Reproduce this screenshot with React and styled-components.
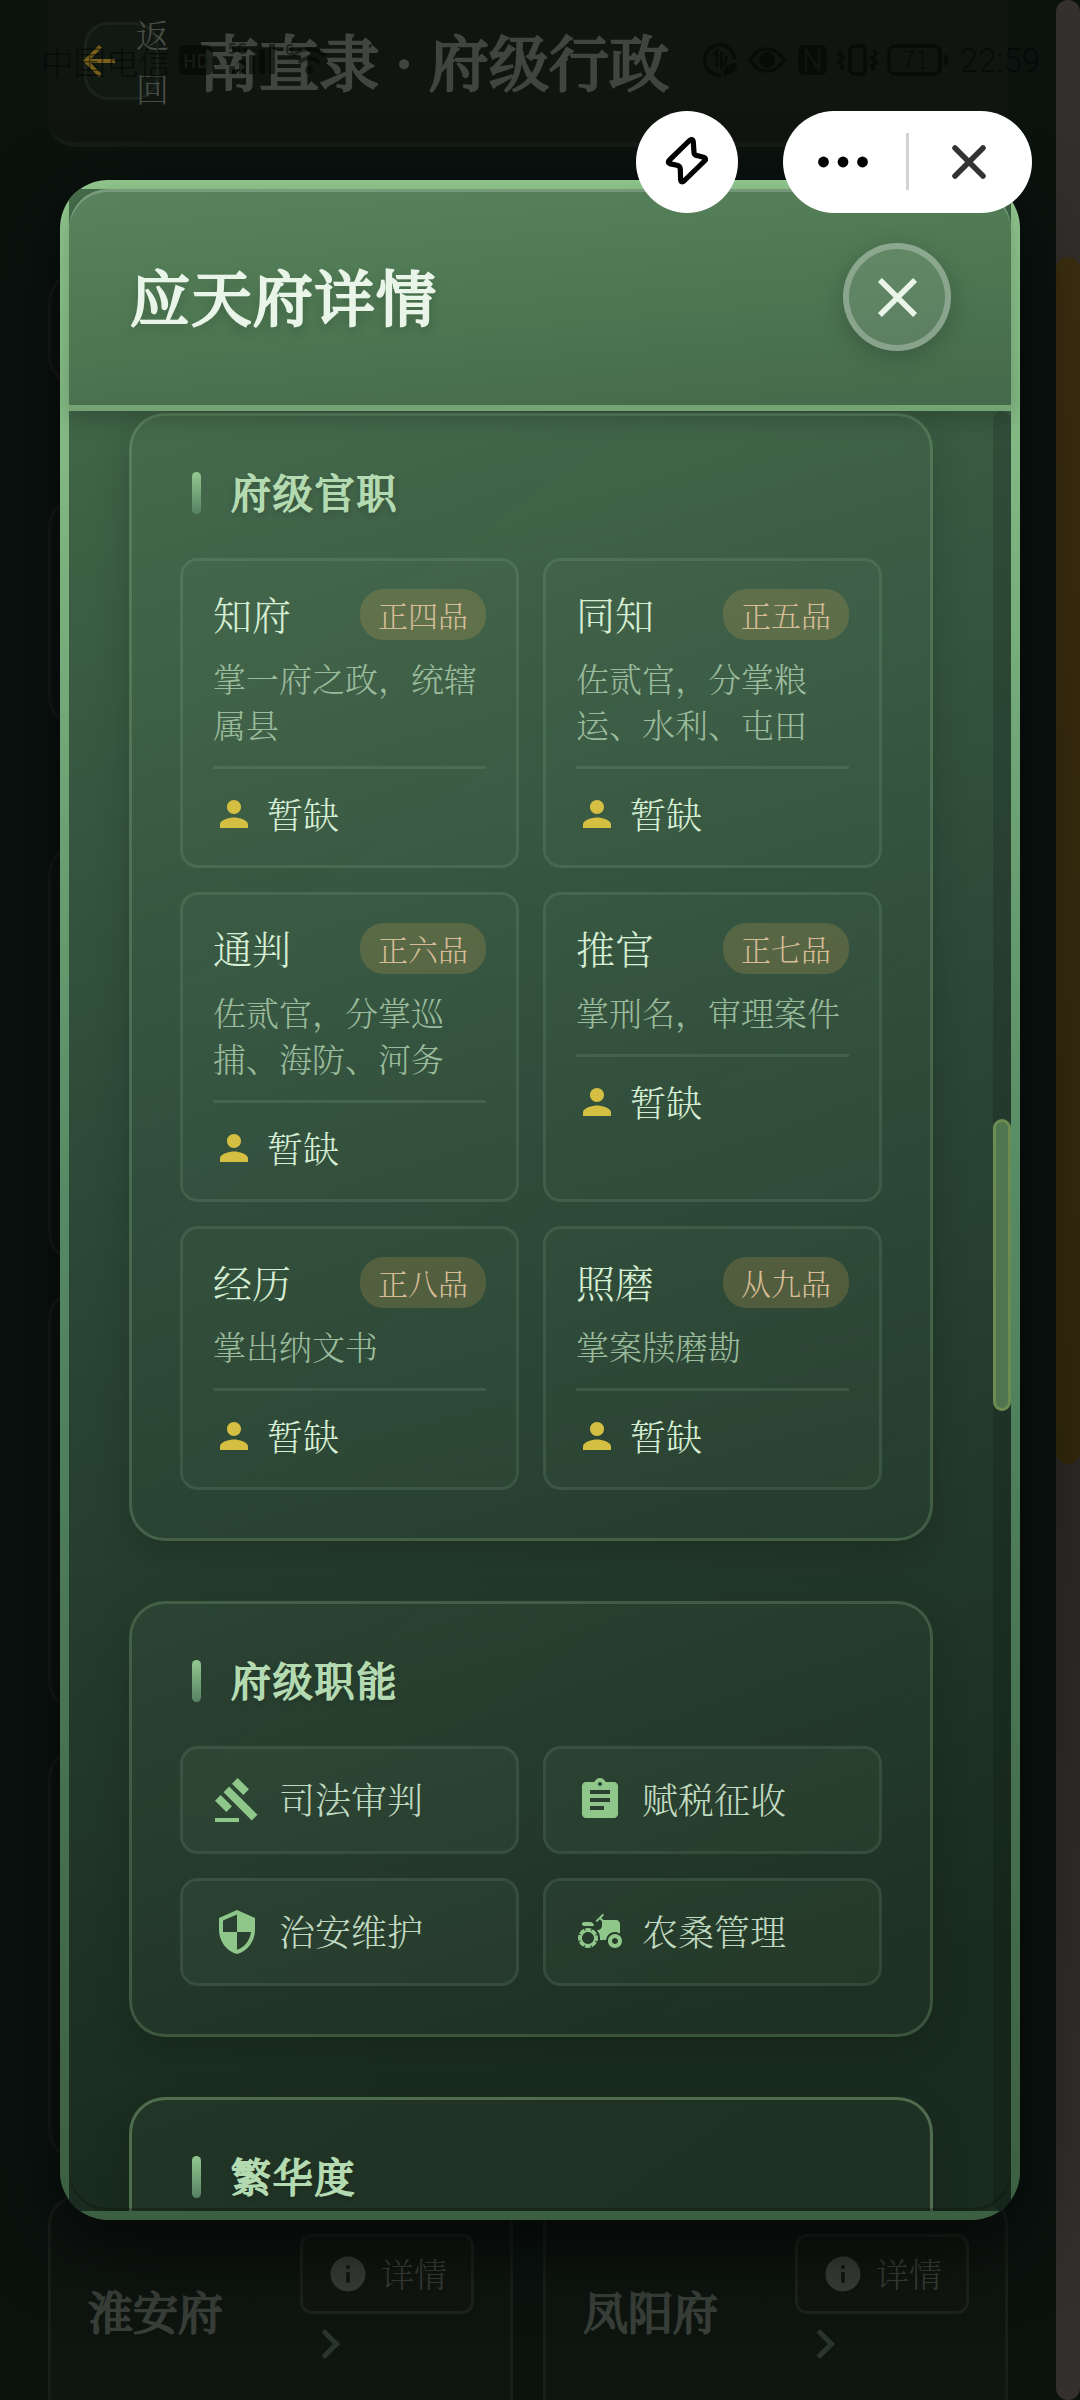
import styled, { createGlobalStyle } from "styled-components";
import {
    MdPerson,
    MdGavel,
    MdAssignment,
    MdSecurity,
    MdAgriculture,
    MdArrowBack,
    MdChevronRight,
    MdInfo,
    MdClose,
} from "react-icons/md";

const offices = [
    { name: "知府", rank: "正四品", duty: "掌一府之政，统辖属县" },
    { name: "同知", rank: "正五品", duty: "佐贰官，分掌粮运、水利、屯田" },
    { name: "通判", rank: "正六品", duty: "佐贰官，分掌巡捕、海防、河务" },
    { name: "推官", rank: "正七品", duty: "掌刑名，审理案件" },
    { name: "经历", rank: "正八品", duty: "掌出纳文书" },
    { name: "照磨", rank: "从九品", duty: "掌案牍磨勘" },
];

const duties = [
    { label: "司法审判", Icon: MdGavel },
    { label: "赋税征收", Icon: MdAssignment },
    { label: "治安维护", Icon: MdSecurity },
    { label: "农桑管理", Icon: MdAgriculture },
];

export default function App() {
    return (
        <Screen>
            <GlobalStyle />
            <PageContent>
                <PageHeader>
                    <BackButton>
                        <MdArrowBack />
                        <span>返回</span>
                    </BackButton>
                    <h1>南直隶<Dot>·</Dot>府级行政</h1>
                </PageHeader>
                <Panel $top={125} $height={114} />
                <Panel $top={111} $height={230} />
                <Panel $top={118} $height={417} />
                <Panel $top={28} $height={421} />
                <Panel $top={37} $height={412} />
                <Prefectures>
                    <Prefecture name="淮安府" />
                    <Prefecture name="凤阳府" />
                </Prefectures>
            </PageContent>
            <PageTrack>
                <PageThumb />
            </PageTrack>
            <StatusBar />
            <Modal>
                <ModalInner>
                    <ModalHeader>
                        <h2>应天府详情</h2>
                        <CloseButton>
                            <MdClose />
                        </CloseButton>
                    </ModalHeader>
                    <ModalBody>
                        <Sections>
                            <Section>
                                <SectionTitle>府级官职</SectionTitle>
                                <Grid>
                                    {offices.map((o) => (
                                        <Office key={o.name} {...o} />
                                    ))}
                                </Grid>
                            </Section>
                            <Section>
                                <SectionTitle>府级职能</SectionTitle>
                                <Grid>
                                    {duties.map(({ label, Icon }) => (
                                        <DutyCard key={label}>
                                            <Icon />
                                            <span>{label}</span>
                                        </DutyCard>
                                    ))}
                                </Grid>
                            </Section>
                            <Section>
                                <SectionTitle>繁华度</SectionTitle>
                            </Section>
                        </Sections>
                        <Track>
                            <Thumb />
                        </Track>
                    </ModalBody>
                </ModalInner>
            </Modal>
            <Capsules />
        </Screen>
    );
}

function Office({ name, rank, duty }) {
    return (
        <OfficeCard>
            <OfficeHead>
                <OfficeName>{name}</OfficeName>
                <Rank>{rank}</Rank>
            </OfficeHead>
            <Desc>{duty}</Desc>
            <Holder>
                <MdPerson />
                <span>暂缺</span>
            </Holder>
        </OfficeCard>
    );
}

function Prefecture({ name }) {
    return (
        <PrefectureCard>
            <h3>{name}</h3>
            <Actions>
                <InfoButton>
                    <MdInfo />
                    <span>详情</span>
                </InfoButton>
                <MdChevronRight />
            </Actions>
        </PrefectureCard>
    );
}

function StatusBar() {
    return (
        <Status>
            <StatusGroup>
                <Carrier>中国电信</Carrier>
                <Hd>HD</Hd>
                <svg width="104" height="40" viewBox="0 0 104 40" fill="currentColor">
                    <text x="3" y="14" fontSize="15" fontWeight="700">5G</text>
                    <rect x="4" y="26" width="6" height="8" />
                    <rect x="14" y="21" width="6" height="13" />
                    <rect x="24" y="15" width="6" height="19" />
                    <rect x="34" y="9" width="6" height="25" />
                    <rect x="44" y="4" width="6" height="30" />
                    <text x="60" y="15" fontSize="15" fontWeight="700">6</text>
                    <g fill="none" stroke="currentColor" strokeWidth="4">
                        <path d="M68 16a22 22 0 0 1 32 0" />
                        <path d="M74 23a13 13 0 0 1 20 0" />
                    </g>
                    <circle cx="84" cy="30" r="4" />
                </svg>
            </StatusGroup>
            <StatusGroup>
                <svg width="245" height="36" viewBox="0 0 245 36" fill="none" stroke="currentColor" strokeWidth="3.4">
                    <path d="M31.500 17.500A15 15 0 1 0 18 33" />
                    <path d="M10 13l4-3.500v15M18.500 9.500v15l4.500-4.500M23 14v5" strokeWidth="2.800" />
                    <path d="M20 33c0-8 5-12 14-12 0 8-5 12-14 12z" fill="currentColor" stroke="none" />
                    <path d="M47 18c4-7 10-11 17-11s13 4 17 11c-4 7-10 11-17 11s-13-4-17-11z" />
                    <circle cx="64" cy="18" r="8" fill="currentColor" stroke="none" />
                    <rect x="95" y="3" width="29" height="30" rx="6" fill="currentColor" stroke="none" />
                    <path d="M103 30V8l13 20V6" stroke="#10160f" strokeWidth="2.500" />
                    <rect x="147" y="4" width="15" height="28" rx="4" />
                    <path d="M138 8l-2 4 4 4-4 4 4 4-2 4M171 8l2 4-4 4 4 4-4 4 2 4" />
                    <rect x="186" y="4" width="51" height="28" rx="6" />
                    <path d="M243 13v10" />
                    <text x="199" y="27" fontSize="25" fontWeight="300" fill="currentColor" stroke="none">71</text>
                </svg>
                <Clock>22:59</Clock>
            </StatusGroup>
        </Status>
    );
}

function Capsules() {
    return (
        <CapsuleRow>
            <Capsule $width={102}>
                <svg width="48" height="54" viewBox="0 0 48 54" fill="none" stroke="#000" strokeWidth="5.200" strokeLinejoin="round">
                    <path d="M26.500 5.500Q30 3 30.300 7L31 17.500Q31.200 20 34 20.600L40.500 22.300Q44 23.500 41.500 26L21.500 45.500Q18 48.500 17.600 44.500L17.300 34Q17 31 14 30.300L7.500 28.900Q3.500 27.800 6.500 25Z" />
                </svg>
            </Capsule>
            <Capsule $width={249}>
                <svg width="249" height="102" viewBox="0 0 249 102">
                    <circle cx="40.500" cy="51" r="5.400" />
                    <circle cx="60" cy="51" r="5.400" />
                    <circle cx="79.500" cy="51" r="5.400" />
                    <path d="M124.500 22v57" stroke="#d3d3d3" strokeWidth="3" />
                    <path d="M172 37l28 28M200 37l-28 28" stroke="#333" strokeWidth="5.500" strokeLinecap="round" />
                </svg>
            </Capsule>
        </CapsuleRow>
    );
}

const GlobalStyle = createGlobalStyle`
    * {
        box-sizing: border-box;
    }
    body {
        margin: 0;
        background: #0a120e;
    }
    h1, h2, h3, p {
        margin: 0;
    }
`;

const Screen = styled.div`
    position: relative;
    display: flex;
    width: 1080px;
    height: 2400px;
    overflow: hidden;
    background: #0b130f;
    font-family: "Noto Serif CJK SC", "Noto Serif SC", "Noto Sans CJK SC", serif;
    font-weight: 300;
`;

const PageContent = styled.div`
    flex: 1;
    padding: 0 48px;
`;

const PageHeader = styled.div`
    display: flex;
    align-items: flex-start;
    height: 147px;
    padding: 22px 0 0 36px;
    background: #10160f;
    border-bottom: 5px solid #151b15;
    border-radius: 0 0 27px 27px;
    h1 {
        margin: -6px 0 0 40px;
        font-size: 60px;
        line-height: 88px;
        font-weight: 400;
        -webkit-text-stroke: 2.6px;
        color: #40463f;
        white-space: nowrap;
    }
`;

const Dot = styled.span`
    display: inline-block;
    width: 50px;
    text-align: center;
`;

const BackButton = styled.div`
    display: flex;
    align-items: center;
    width: 75px;
    height: 78px;
    border: 3px solid #1a231b;
    border-radius: 24px;
    background: #111912;
    color: #484e47;
    svg {
        flex: none;
        margin-left: -12px;
        width: 48px;
        height: 48px;
        color: #7a601b;
    }
    span {
        flex: none;
        width: 34px;
        margin-left: 13px;
        font-size: 33px;
        line-height: 54px;
        word-break: break-all;
    }
`;

const Panel = styled.div`
    height: ${(props) => props.$height}px;
    margin-top: ${(props) => props.$top}px;
    border: 3px solid #161b18;
    border-radius: 30px;
    background: #0d1310;
`;

const Prefectures = styled.div`
    display: grid;
    grid-template-columns: 465px 465px;
    gap: 30px;
    margin-top: 35px;
`;

const PrefectureCard = styled.div`
    display: flex;
    justify-content: space-between;
    align-items: flex-start;
    height: 260px;
    padding: 36px;
    border: 3px solid #181e19;
    border-radius: 30px;
    background: linear-gradient(#0d1310, #0f170f);
    h3 {
        margin: 45px 0 0 1px;
        font-size: 45px;
        line-height: 64px;
        font-weight: 400;
        -webkit-text-stroke: 2px;
        color: #383e38;
    }
`;

const Actions = styled.div`
    display: flex;
    flex-direction: column;
    > svg {
        width: 60px;
        height: 60px;
        color: #2a352e;
    }
`;

const InfoButton = styled.div`
    display: flex;
    align-items: center;
    justify-content: center;
    gap: 12px;
    width: 174px;
    height: 80px;
    border: 3px solid #1c221c;
    border-radius: 12px;
    background: #10160f;
    color: #383e38;
    font-size: 33px;
    svg {
        width: 42px;
        height: 42px;
    }
    span {
        margin-top: -3px;
    }
`;

const PageTrack = styled.div`
    width: 24px;
    height: 2400px;
    padding-top: 257px;
    background: linear-gradient(#33302d, #2b2725 60%, #33302d);
    border-radius: 12px;
`;

const PageThumb = styled.div`
    height: 1207px;
    border-radius: 12px;
    background: linear-gradient(#3a2d10, #31270d);
`;

const Status = styled.div`
    position: absolute;
    top: 36px;
    left: 41px;
    width: 1001px;
    height: 48px;
    display: flex;
    justify-content: space-between;
    color: rgba(0, 0, 0, 0.5);
    font-family: "Noto Sans CJK SC", sans-serif;
`;

const StatusGroup = styled.div`
    display: flex;
    align-items: center;
`;

const Carrier = styled.span`
    font-size: 32.5px;
`;

const Hd = styled.span`
    margin: 0 12px 0 8px;
    padding: 0 4px;
    border-radius: 6px;
    background: rgba(0, 0, 0, 0.5);
    color: #171d17;
    font-size: 18px;
    line-height: 30px;
    font-weight: 500;
`;

const Clock = styled.span`
    width: 82px;
    margin-left: 12px;
    font-family: Roboto, sans-serif;
    font-size: 33px;
    font-weight: 300;
    white-space: nowrap;
`;

const Modal = styled.div`
    position: absolute;
    top: 180px;
    left: 60px;
    width: 960px;
    height: 2040px;
    padding: 9px;
    overflow: hidden;
    border-radius: 48px;
    background: linear-gradient(#92c88e, #568a64 50%, #3b5f41);
    box-shadow: 0 24px 80px rgba(0, 0, 0, 0.7);
`;

const ModalInner = styled.div`
    position: relative;
    display: flex;
    flex-direction: column;
    height: 2022px;
    background: linear-gradient(165deg, #466d4c 0%, #2c4837 45%, #1a2c1f 88%);
    &::after {
        content: "";
        position: absolute;
        inset: 0;
        z-index: 2;
        border-radius: 39px;
        box-shadow: inset 0 3px 0 rgba(255, 255, 255, 0.2), inset 0 -3px 0 rgba(0, 0, 0, 0.2);
        pointer-events: none;
    }
`;

const ModalHeader = styled.div`
    display: flex;
    flex: none;
    align-items: center;
    justify-content: space-between;
    height: 222px;
    padding: 0 60px;
    border-bottom: 6px solid #75a474;
    border-radius: 39px 39px 0 0;
    background: linear-gradient(175deg, #58835c, #4e7852 50%, #45694b);
    z-index: 1;
    box-shadow: 0 6px 24px rgba(0, 0, 0, 0.22);
    h2 {
        margin: -4px 0 0 1px;
        font-size: 60px;
        letter-spacing: 1.5px;
        font-weight: 400;
        -webkit-text-stroke: 2.6px;
        color: #e8f5e8;
        text-shadow: 0 6px 12px rgba(0, 0, 0, 0.3);
    }
`;

const CloseButton = styled.div`
    display: flex;
    align-items: center;
    justify-content: center;
    width: 108px;
    height: 108px;
    border: 6px solid rgba(255, 255, 255, 0.27);
    border-radius: 50%;
    background: rgba(255, 255, 255, 0.11);
    box-shadow: 0 6px 24px rgba(0, 0, 0, 0.2);
    color: #e8f5e8;
    svg {
        width: 67px;
        height: 67px;
    }
`;

const ModalBody = styled.div`
    display: flex;
    flex: 1;
    min-height: 0;
    justify-content: space-between;
    overflow: hidden;
`;

const Sections = styled.div`
    display: flex;
    flex-direction: column;
    gap: 60px;
    width: 864px;
    padding: 2px 0 0 60px;
`;

const Section = styled.div`
    flex: none;
    padding: 48px;
    border: 3px solid rgba(160, 205, 150, 0.25);
    border-radius: 36px;
    background: linear-gradient(145deg, rgba(160, 201, 160, 0.06), rgba(150, 201, 150, 0.03));
    background-clip: padding-box;
    box-shadow: 0 12px 36px rgba(0, 0, 0, 0.17);
    &:last-child {
        border-color: rgba(160, 205, 150, 0.4);
    }
`;

const SectionTitle = styled.div`
    display: flex;
    align-items: center;
    height: 58px;
    margin-bottom: 36px;
    padding: 0 0 5px 12px;
    font-size: 40px;
    font-weight: 400;
    -webkit-text-stroke: 1.8px;
    letter-spacing: 1.8px;
    color: #b3dab0;
    text-shadow: 0 3px 6px rgba(0, 0, 0, 0.3);
    &::before {
        content: "";
        width: 9px;
        height: 42px;
        margin: 5px 30px 0 0;
        border-radius: 5px;
        background: linear-gradient(#92c88e, #568264);
    }
`;

const Grid = styled.div`
    display: grid;
    grid-template-columns: 1fr 1fr;
    gap: 24px;
`;

const OfficeCard = styled.div`
    padding: 28px 30px 30px;
    border: 3px solid rgba(200, 235, 205, 0.12);
    border-radius: 18px;
    background: rgba(220, 255, 220, 0.025);
    background-clip: padding-box;
`;

const OfficeHead = styled.div`
    display: flex;
    align-items: center;
    justify-content: space-between;
    height: 51px;
`;

const OfficeName = styled.div`
    margin-top: -4px;
    font-size: 39px;
    color: #d6efd4;
`;

const Rank = styled.div`
    height: 51px;
    padding: 0 18px;
    border-radius: 24px;
    background: rgba(212, 170, 85, 0.21);
    color: #d6bc96;
    font-size: 30px;
    line-height: 50px;
`;

const Desc = styled.p`
    margin: 15px 0 19px;
    color: #9abb9c;
    font-size: 33px;
    line-height: 46px;
`;

const Holder = styled.div`
    display: flex;
    align-items: center;
    gap: 12px;
    height: 69px;
    padding-top: 23px;
    border-top: 3px solid rgba(200, 235, 205, 0.11);
    font-size: 36px;
    line-height: 48px;
    color: #d6efd4;
    svg {
        width: 42px;
        height: 42px;
        color: #d4bf42;
    }
`;

const DutyCard = styled.div`
    display: flex;
    align-items: center;
    gap: 18px;
    height: 108px;
    padding: 0 30px;
    border: 3px solid rgba(200, 235, 205, 0.13);
    border-radius: 18px;
    background: rgba(210, 255, 215, 0.04);
    background-clip: padding-box;
    color: #c0dac1;
    font-size: 36px;
    svg {
        width: 48px;
        height: 48px;
        color: #8fc78b;
    }
    span {
        margin-top: -4px;
    }
`;

const Track = styled.div`
    width: 18px;
    height: 1800px;
    padding-top: 708px;
    border-radius: 9px;
    background: rgba(0, 0, 0, 0.15);
`;

const Thumb = styled.div`
    height: 292px;
    border: 3px solid #6d8c52;
    border-radius: 9px;
    background: #50754f;
`;

const CapsuleRow = styled.div`
    position: absolute;
    top: 111px;
    left: 636px;
    z-index: 5;
    display: flex;
    gap: 45px;
`;

const Capsule = styled.div`
    display: flex;
    align-items: center;
    justify-content: center;
    width: ${(props) => props.$width}px;
    height: 102px;
    border-radius: 51px;
    background: #fff;
`;
